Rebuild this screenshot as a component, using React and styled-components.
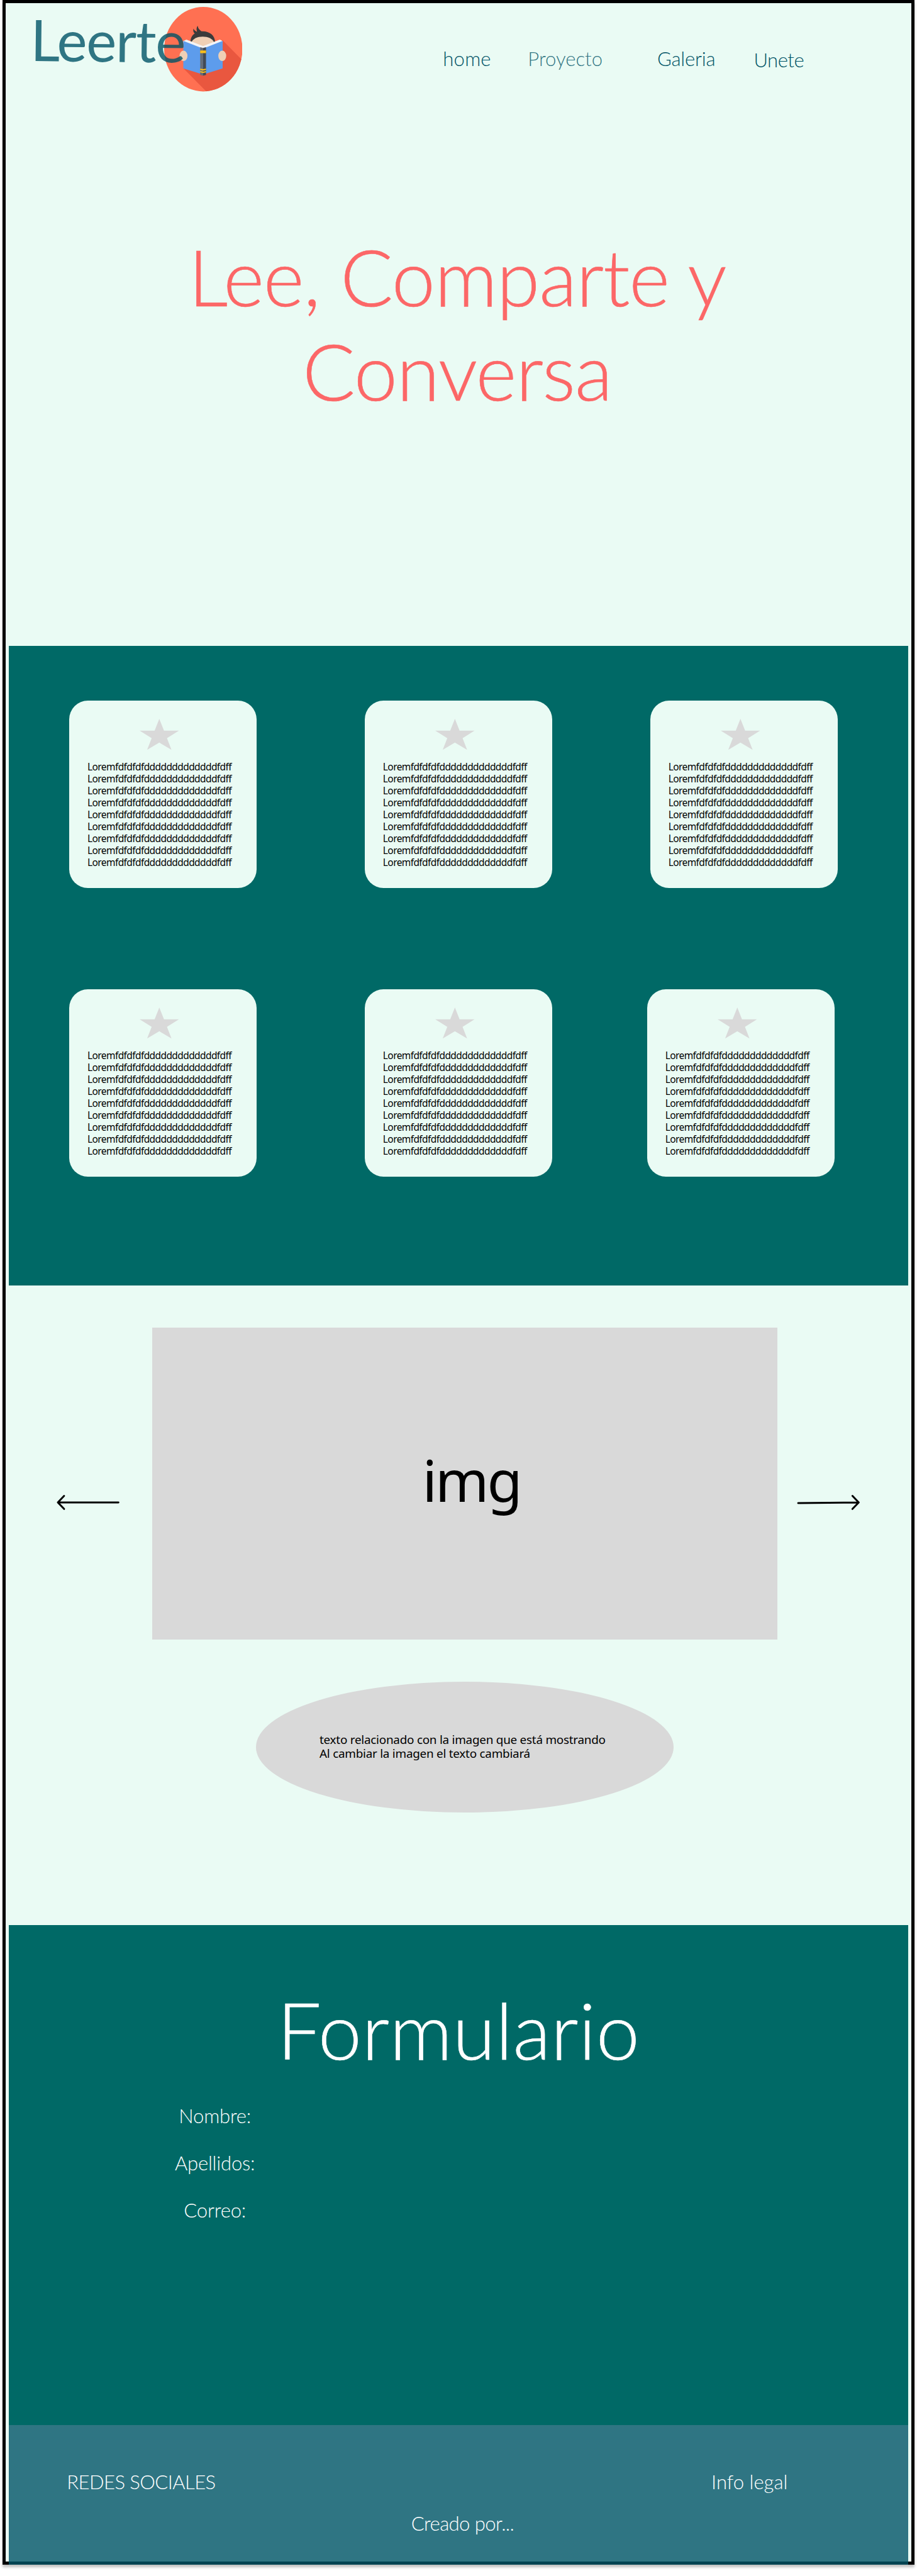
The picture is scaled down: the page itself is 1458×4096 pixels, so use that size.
import React from 'react';
import styled, { createGlobalStyle } from 'styled-components';

const mint = '#eafbf4';
const teal = '#006966';
const ink = '#005466';
const inkSoft = 'rgba(0, 84, 102, 0.8)';
const grey = '#d9d9d9';
const display = '"Lato", "Liberation Sans", sans-serif';
const text = '"Noto Sans", "Open Sans", sans-serif';

const GlobalStyle = createGlobalStyle`
  * { box-sizing: border-box; }
  html, body { margin: 0; background: #fff; }
  body { overflow: hidden; }
`;

const Page = styled.div`
  zoom: 0.9932;
  width: 1468px;
  height: 4124px;
  padding: 0 4px;
`;

const Frame = styled.div`
  height: 4106px;
  background: ${mint};
  border: 5.1px solid #000;
  box-shadow: 0 4px 4px rgba(0, 0, 0, 0.25);
`;

const Header = styled.header`
  display: flex;
  align-items: flex-start;
  height: 150px;
  padding-left: 39px;
`;

const LogoText = styled.span`
  position: relative;
  z-index: 1;
  width: 245px;
  margin-top: 7.5px;
  font: 400 91.5px/100px ${display};
  letter-spacing: -1.2px;
  color: ${inkSoft};
  white-space: nowrap;
  transform: rotate(0.6deg);
  transform-origin: left bottom;
`;

const LogoIcon = styled.svg`
  width: 126.7px;
  height: 137px;
  margin: 4.7px 0 0 -31.6px;
  flex: none;
`;

const Nav = styled.nav`
  display: grid;
  grid-template-columns: 136px 207px 154.5px auto;
  margin: 69px 0 0 321px;
`;

const NavLink = styled.a`
  padding-top: ${(p) => p.$drop || 0}px;
  font: 300 31.3px/40px ${display};
  letter-spacing: ${(p) => p.$track || 0}px;
  color: ${(p) => (p.$soft ? inkSoft : ink)};
`;

const Hero = styled.section`
  height: 879px;
  padding-top: 211px;
`;

const HeroTitle = styled.h1`
  width: 960px;
  margin: 0 auto;
  padding-right: 4px;
  font: 300 125px/151px ${display};
  letter-spacing: -1.1px;
  text-align: center;
  color: #fc6767;
  -webkit-text-stroke: 0.6px #fc6767;
`;

const Features = styled.section`
  display: flex;
  flex-direction: column;
  gap: 162px;
  height: 1024px;
  margin: 0 5px;
  padding: 88px 0 0 97px;
  background: ${teal};
`;

const CardRow = styled.div`
  display: grid;
  grid-template-columns: 473px ${(p) => p.$middle}px 300px;
`;

const CardBox = styled.article`
  width: 300px;
  height: 300px;
  padding: 29px 0 0 29px;
  border-radius: 30px;
  background: ${mint};
`;

const Star = styled.svg`
  display: block;
  width: 63px;
  height: 50px;
  margin-left: 84px;
  fill: ${grey};
`;

const CardText = styled.p`
  margin: 17.7px 0 0;
  font: 400 15.6px/19.05px ${text};
  letter-spacing: -0.59px;
  color: #000;
`;

const Line = styled.span`
  display: block;
  white-space: nowrap;
`;

const Gallery = styled.section`
  height: 1024px;
  padding-top: 67px;
`;

const Carousel = styled.div`
  display: flex;
  align-items: flex-start;
  padding-left: 82px;
`;

const Arrow = styled.svg`
  flex: none;
  width: 99px;
  height: 24px;
  margin-top: 268px;
  overflow: visible;
  fill: none;
  stroke: #000;
  stroke-width: 3;
  stroke-linecap: round;
  stroke-linejoin: round;
`;

const Slide = styled.div`
  flex: none;
  width: 1000px;
  height: 500px;
  margin: 0 34px 0 54px;
  padding: 184px 0 0 432px;
  background: ${grey};
  font: 400 92px/120px ${text};
  letter-spacing: -3px;
  color: #000;
`;

const Caption = styled.p`
  width: 668px;
  height: 210px;
  margin: 67px 0 0 401px;
  padding: 81.5px 0 0 101.5px;
  border-radius: 50%;
  background: ${grey};
  font: 400 19px/22.8px ${text};
  letter-spacing: -0.24px;
  color: #000;
`;

const FormSection = styled.section`
  height: 800px;
  margin: 0 5px;
  padding-top: 91.6px;
  background: ${teal};
  color: #fff;
`;

const FormTitle = styled.h2`
  margin: 0;
  font: 300 125px/150px ${display};
  letter-spacing: 0.2px;
  text-align: center;
  -webkit-text-stroke: 0.6px #fff;
`;

const Labels = styled.div`
  display: flex;
  flex-direction: column;
  align-items: center;
  width: 200px;
  margin: 25.7px 0 0 230px;
`;

const Label = styled.label`
  font: 300 31.3px/75.8px ${display};
  letter-spacing: -0.2px;
`;

const Footer = styled.footer`
  height: 224px;
  margin: 0 5px;
  padding-top: 72px;
  background: ${inkSoft};
  color: #fff;
  font: 300 31.3px/40px ${display};
`;

const FooterRow = styled.div`
  display: flex;
  justify-content: space-between;
  padding: 0 193px 0 93px;
`;

const FooterText = styled.span`
  letter-spacing: ${(p) => p.$track || 0}px;
`;

const Credit = styled.div`
  margin-top: 26.6px;
  padding-left: 13px;
  text-align: center;
  letter-spacing: -0.6px;
`;

function Reader() {
  return (
    <LogoIcon viewBox="20 14 380 411" preserveAspectRatio="none">
      <defs>
        <clipPath id="disc">
          <ellipse cx="211" cy="220" rx="188" ry="203" />
        </clipPath>
      </defs>
      <ellipse cx="211" cy="220" rx="188" ry="203" fill="#ff7052" />
      <path clipPath="url(#disc)" fill="#e9573f" d="M303 176 L420 295 V430 H232 L116 312 Z" />
      <path
        fill="#3b3b3b"
        d="M149 186 C150 166 158 152 170 145 C163 139 161 130 164 121 C168 130 174 134 181 136 C177 126 178 116 184 108 C186 121 193 128 202 134 C240 132 266 152 268 186 Z"
      />
      <path fill="#efd0b5" d="M154 188 C166 150 250 150 263 188 L210 215 Z" />
      <path fill="#f3f4f6" d="M115 181 L130 174 L210 205 L290 174 L304 181 L304 192 L210 222 L115 192 Z" />
      <path fill="#5d9cec" d="M115 180 L210 217 L304 180 V312 L210 342 L115 312 Z" />
      <path fill="#656d78" d="M196 210 L210 214 V347 L196 344 Z" />
      <path fill="#434a54" d="M224 210 L210 214 V347 L224 344 Z" />
      <path fill="#fdbf1a" d="M196 226 H224 V239 H196 Z M196 313 L210 316 L224 313 V320 L210 323 L196 320 Z M196 325 L210 328 L224 325 V331 L210 334 L196 331 Z" />
      <ellipse cx="116" cy="252" rx="19" ry="25" fill="#efd0b5" />
      <ellipse cx="302" cy="252" rx="19" ry="25" fill="#efd0b5" />
    </LogoIcon>
  );
}

const lines = Array(9).fill('Loremfdfdfdfdddddddddddddfdff');

function Card() {
  return (
    <CardBox>
      <Star viewBox="0 0 63 50">
        <path d="M31.5 0 L39 19 H63 L43.8 31 L51 49.7 L31.5 38 L12 49.7 L19.3 31 L0 19 H24 Z" />
      </Star>
      <CardText>
        {lines.map((line, i) => (
          <Line key={i}>{line}</Line>
        ))}
      </CardText>
    </CardBox>
  );
}

export default function App() {
  return (
    <Page>
      <GlobalStyle />
      <Frame>
        <Header>
          <LogoText>Leerte</LogoText>
          <Reader />
          <Nav>
            <NavLink $track={0.2}>home</NavLink>
            <NavLink $soft>Proyecto</NavLink>
            <NavLink $track={-0.2}>Galeria</NavLink>
            <NavLink $drop={2} $track={-0.5}>Unete</NavLink>
          </Nav>
        </Header>
        <Hero>
          <HeroTitle>Lee, Comparte y Conversa</HeroTitle>
        </Hero>
        <Features>
          {[457, 452].map((middle) => (
            <CardRow key={middle} $middle={middle}>
              <Card />
              <Card />
              <Card />
            </CardRow>
          ))}
        </Features>
        <Gallery>
          <Carousel>
            <Arrow viewBox="0 0 99 24">
              <path d="M99 12 H2 M12 1.5 L2 12 L12 22.5" />
            </Arrow>
            <Slide>img</Slide>
            <Arrow viewBox="0 0 99 24">
              <path d="M0 13 L97 12 M87 1.5 L97 12 L87 22.5" />
            </Arrow>
          </Carousel>
          <Caption>
            <Line>texto relacionado con la imagen que está mostrando</Line>
            <Line>Al cambiar la imagen el texto cambiará</Line>
          </Caption>
        </Gallery>
        <FormSection>
          <FormTitle>Formulario</FormTitle>
          <Labels>
            <Label>Nombre:</Label>
            <Label>Apellidos:</Label>
            <Label>Correo:</Label>
          </Labels>
        </FormSection>
        <Footer>
          <FooterRow>
            <FooterText $track={-0.6}>REDES SOCIALES</FooterText>
            <FooterText>Info legal</FooterText>
          </FooterRow>
          <Credit>Creado por...</Credit>
        </Footer>
      </Frame>
    </Page>
  );
}
